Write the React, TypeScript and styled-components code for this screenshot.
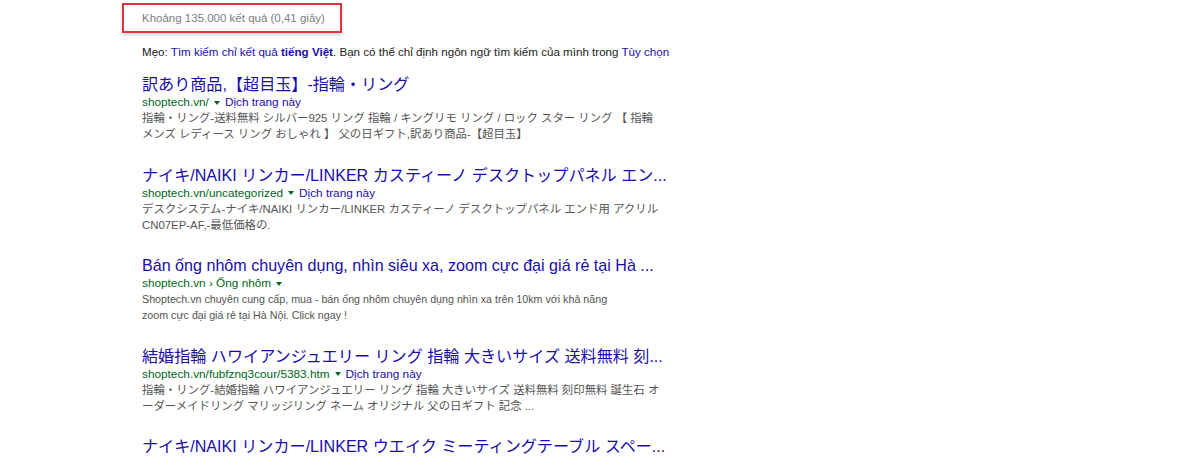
import React from 'react'
import styled, { createGlobalStyle } from 'styled-components'

const GlobalStyle = createGlobalStyle`
  html, body {
    margin: 0;
    padding: 0;
    background: #fff;
  }
  body {
    font-family: "Liberation Sans", Arial, "Noto Sans CJK JP", sans-serif;
  }
`

const Page = styled.div`
  width: 1200px;
  height: 459px;
  overflow: hidden;
  padding-top: 3px;
  padding-left: 122px;
  box-sizing: border-box;
`

const StatsBox = styled.div`
  display: flex;
  align-items: center;
  height: 30px;
  width: 220px;
  box-sizing: border-box;
  padding-left: 18px;
  border: 2px solid #e2343a;
  box-shadow: 0 2px 3px rgba(0, 0, 0, 0.18);
  font-size: 11.5px;
  color: #808080;
  white-space: nowrap;
`

const Column = styled.div`
  width: 530px;
  padding-left: 20px;
`

const Tip = styled.div`
  margin-top: 11px;
  font-size: 11.6px;
  line-height: 16px;
  color: #222;
  white-space: nowrap;
`

const TipLink = styled.a<{ $bold?: boolean }>`
  color: #1a0dab;
  text-decoration: none;
  font-weight: ${p => (p.$bold ? 'bold' : 'normal')};
`

const Results = styled.div`
  margin-top: 14px;
  display: flex;
  flex-direction: column;
  gap: 22.5px;
`

const Result = styled.div`
  display: flex;
  flex-direction: column;
`

const Title = styled.a`
  display: block;
  font-size: 16.1px;
  line-height: 20px;
  color: #1a0dab;
  text-decoration: none;
  white-space: nowrap;
  overflow: hidden;
  text-overflow: ellipsis;
`

const UrlRow = styled.div`
  display: flex;
  align-items: center;
  gap: 5px;
  font-size: 11.8px;
  line-height: 16px;
  white-space: nowrap;
`

const Cite = styled.cite`
  font-style: normal;
  color: #006621;
`

const Arrow = styled.span`
  display: inline-block;
  width: 0;
  height: 0;
  border-left: 3.5px solid transparent;
  border-right: 3.5px solid transparent;
  border-top: 4px solid #006621;
  margin-top: 1px;
`

const Translate = styled.a`
  color: #1a0dab;
  text-decoration: none;
`

const Snippet = styled.div<{ $cjk?: boolean }>`
  font-size: ${p => (p.$cjk ? '11.4px' : '10.7px')};
  line-height: 16px;
  color: #545454;
  white-space: nowrap;
`

type Item = {
  title: string
  url: string
  translate: boolean
  cjk: boolean
  snippet: string[]
}

const items: Item[] = [
  {
    title: '訳あり商品,【超目玉】-指輪・リング',
    url: 'shoptech.vn/',
    translate: true,
    cjk: true,
    snippet: [
      '指輪・リング-送料無料 シルバー925 リング 指輪 / キングリモ リング / ロック スター リング 【 指輪',
      'メンズ レディース リング おしゃれ 】 父の日ギフト,訳あり商品-【超目玉】',
    ],
  },
  {
    title: 'ナイキ/NAIKI リンカー/LINKER カスティーノ デスクトップパネル エン...',
    url: 'shoptech.vn/uncategorized',
    translate: true,
    cjk: true,
    snippet: [
      'デスクシステム-ナイキ/NAIKI リンカー/LINKER カスティーノ デスクトップパネル エンド用 アクリル',
      'CN07EP-AF,-最低価格の.',
    ],
  },
  {
    title: 'Bán ống nhôm chuyên dụng, nhìn siêu xa, zoom cực đại giá rẻ tại Hà ...',
    url: 'shoptech.vn › Ống nhôm',
    translate: false,
    cjk: false,
    snippet: [
      'Shoptech.vn chuyên cung cấp, mua - bán ống nhôm chuyên dụng nhìn xa trên 10km với khả năng',
      'zoom cực đại giá rẻ tại Hà Nội. Click ngay !',
    ],
  },
  {
    title: '結婚指輪 ハワイアンジュエリー リング 指輪 大きいサイズ 送料無料 刻...',
    url: 'shoptech.vn/fubfznq3cour/5383.htm',
    translate: true,
    cjk: true,
    snippet: [
      '指輪・リング-結婚指輪 ハワイアンジュエリー リング 指輪 大きいサイズ 送料無料 刻印無料 誕生石 オ',
      'ーダーメイドリング マリッジリング ネーム オリジナル 父の日ギフト 記念 ...',
    ],
  },
  {
    title: 'ナイキ/NAIKI リンカー/LINKER ウエイク ミーティングテーブル スペー...',
    url: 'shoptech.vn/uncategorized',
    translate: true,
    cjk: true,
    snippet: [''],
  },
]

const SearchResult = ({ item }: { item: Item }) => (
  <Result>
    <Title href="#">{item.title}</Title>
    <UrlRow>
      <Cite>{item.url}</Cite>
      <Arrow />
      {item.translate && <Translate href="#">Dịch trang này</Translate>}
    </UrlRow>
    <Snippet $cjk={item.cjk}>
      {item.snippet.map((line, i) => (
        <div key={i}>{line}</div>
      ))}
    </Snippet>
  </Result>
)

export default function App() {
  return (
    <>
      <GlobalStyle />
      <Page>
        <StatsBox>Khoảng 135.000 kết quả (0,41 giây)</StatsBox>
        <Column>
          <Tip>
            Mẹo: <TipLink href="#">Tìm kiếm chỉ kết quả <TipLink as="b" $bold>tiếng Việt</TipLink></TipLink>. Bạn
            có thể chỉ định ngôn ngữ tìm kiếm của mình trong <TipLink href="#">Tùy chọn</TipLink>
          </Tip>
          <Results>
            {items.map((item, i) => (
              <SearchResult key={i} item={item} />
            ))}
          </Results>
        </Column>
      </Page>
    </>
  )
}
